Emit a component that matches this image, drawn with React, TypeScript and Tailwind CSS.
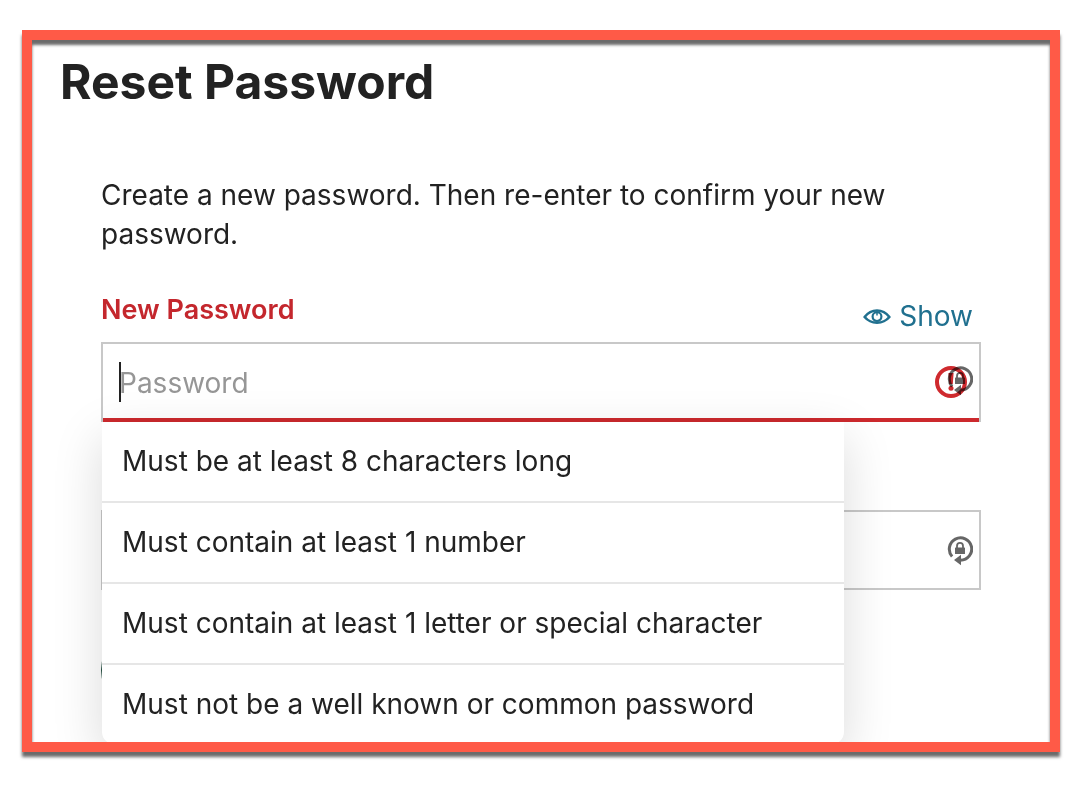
import { useState } from 'react'

const rules = [
  'Must be at least 8 characters long',
  'Must contain at least 1 number',
  'Must contain at least 1 letter or special character',
  'Must not be a well known or common password',
]

function EyeIcon() {
  return (
    <svg className="h-4 w-7" viewBox="0 0 28 16" fill="none" stroke="currentColor" aria-hidden="true">
      <path d="M1.600 9C5 4.600 9.300 2.500 14 2.500S23 4.600 26.400 9C23 13 18.700 14.700 14 14.700S5 13 1.600 9Z" strokeWidth="2.600" strokeLinejoin="round" />
      <circle cx="14" cy="8.600" r="4.400" strokeWidth="2.200" />
      <path d="M14 5v2.500" strokeWidth="1.500" />
    </svg>
  )
}

function LockCycleIcon() {
  return (
    <svg className="h-[30px] w-[26px]" viewBox="0 0 26 30" fill="none" aria-hidden="true">
      <path d="M5.100 20.400A11.200 11.200 0 1 1 13.500 24.200" stroke="#666666" strokeWidth="3" />
      <path d="M14 18.800v10.400L7 24.100z" fill="#666666" />
      <path d="M10 12V9.900a3 3 0 0 1 6 0V12" stroke="#666666" strokeWidth="1.800" />
      <rect x="8" y="11.400" width="10" height="6.600" rx="0.600" fill="#666666" />
    </svg>
  )
}

function AlertIcon() {
  return (
    <svg className="h-8 w-8" viewBox="0 0 32 32" fill="none" aria-hidden="true">
      <circle cx="16" cy="16" r="14" stroke="#cf2a2e" strokeWidth="4" />
      <path d="M13.400 7h5.200l-.8 11h-3.600z" fill="#cf2a2e" />
      <circle cx="16" cy="22.300" r="2.500" fill="#cf2a2e" />
    </svg>
  )
}

export default function App() {
  const [password, setPassword] = useState('')
  const [confirm, setConfirm] = useState('')
  const [visible, setVisible] = useState(false)

  const type = visible ? 'text' : 'password'
  const inputCls = 'block h-full w-full bg-transparent pt-1 pr-14 pl-4 text-[28px] text-[#222222] caret-transparent placeholder:text-[#969696] placeholder:opacity-100 focus:outline-none'

  return (
    <main className="flex min-h-screen flex-col bg-white pt-[30px] pr-3 pb-[34px] pl-[22px] font-['Inter',sans-serif] text-[#222222]">
      <section className="flex-1 overflow-hidden border-10 border-[#ff5a47] shadow-[0_5px_3px_#6b6b6b] inset-shadow-[0_5px_3px_#6b6b6b]">
        <h1 className="pt-3 pl-7 text-5xl leading-[60px] font-bold">Reset Password</h1>

        <form className="px-[69px] pt-16" onSubmit={(e) => e.preventDefault()}>
          <p className="text-[28px] leading-[39px]">
            Create a new password. Then re-enter to confirm your new password.
          </p>

          <div className="flex items-end justify-between pt-9 pr-2">
            <label htmlFor="new-password" className="pb-3 text-[27px] leading-10 font-semibold text-[#c4272d]">
              New Password
            </label>
            <button
              type="button"
              onClick={() => setVisible(!visible)}
              className="mb-2 flex items-center gap-2 text-[28px] leading-9 text-[#20708f]"
            >
              <EyeIcon />
              {visible ? 'Hide' : 'Show'}
            </button>
          </div>

          <div className="relative">
            <div className="h-20 border-x-2 border-t-2 border-[#c8c8c8]">
              <input
                id="new-password"
                type={type}
                value={password}
                onChange={(e) => setPassword(e.target.value)}
                placeholder="Password"
                aria-describedby="password-rules"
                className={inputCls + ' border-b-4 border-[#cc292d]'}
              />
            </div>
            {password === '' && (
              <span className="absolute top-5 left-[18px] h-10 w-0.5 bg-[#222222]" />
            )}
            <span className="pointer-events-none absolute top-6 right-3.5">
              <AlertIcon />
            </span>
            <span className="pointer-events-none absolute top-6 right-2 mix-blend-multiply">
              <LockCycleIcon />
            </span>

            <ul
              id="password-rules"
              className="absolute top-full left-px z-10 w-[742px] max-w-full divide-y-2 divide-[#e6e6e6] rounded-b-xl bg-white shadow-[0_16px_50px_rgba(0,0,0,0.15)]"
            >
              {rules.map((rule) => (
                <li key={rule} className="px-5 py-5 text-[28px] leading-[39px]">{rule}</li>
              ))}
            </ul>
          </div>

          <div className="relative mt-[88px] h-20 border-2 border-[#c8c8c8]">
            <input
              type={type}
              value={confirm}
              onChange={(e) => setConfirm(e.target.value)}
              aria-label="Confirm password"
              className={inputCls}
            />
            <span className="pointer-events-none absolute top-6 right-1.5">
              <LockCycleIcon />
            </span>
          </div>

          <button type="submit" aria-label="Reset password" className="mt-10 block h-20 w-80 rounded-full bg-[#1d4a3c]" />
        </form>
      </section>
    </main>
  )
}
